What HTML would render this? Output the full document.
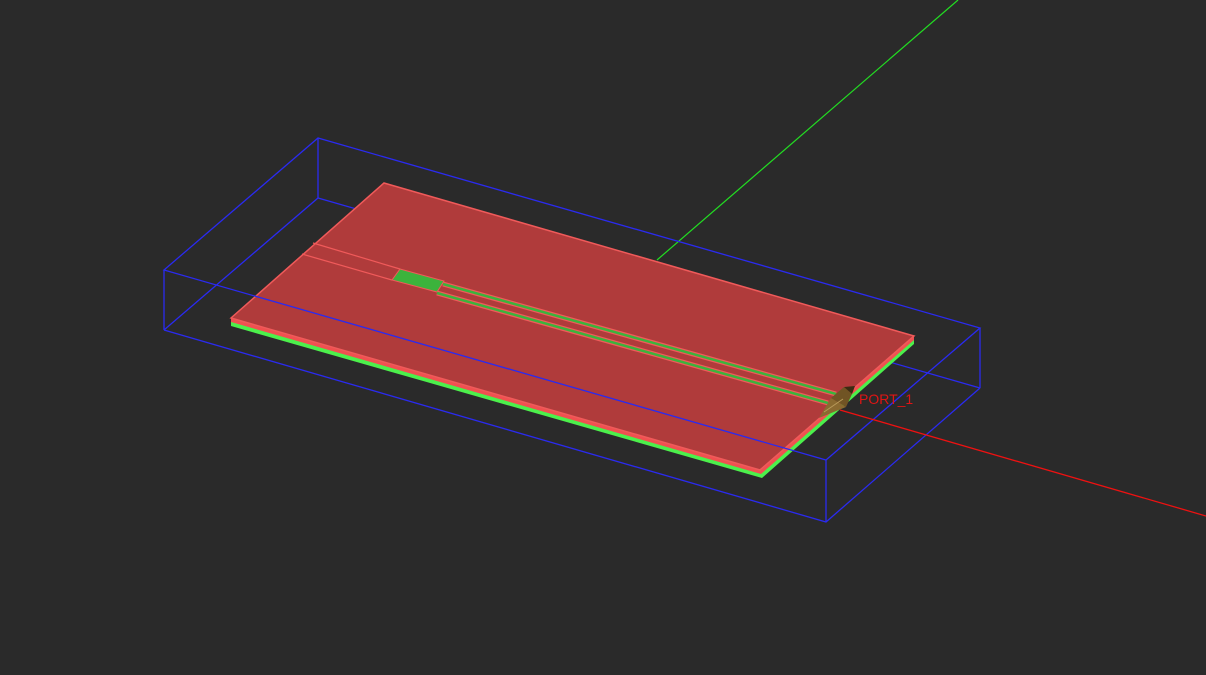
<!DOCTYPE html>
<html><head><style>html,body{margin:0;padding:0;background:#2a2a2a;overflow:hidden}</style></head>
<body>
<svg width="1206" height="675" viewBox="0 0 1206 675" xmlns="http://www.w3.org/2000/svg" style="display:block">
<rect width="1206" height="675" fill="#2a2a2a"/>
<g stroke="#2a2af0" stroke-width="1.3" fill="none">
<polyline points="164,330 318,198 980,388"/>
<line x1="318" y1="138" x2="318" y2="198"/>
</g>
<line x1="657" y1="260" x2="958" y2="0" stroke="#22dd22" stroke-width="1.2"/>
<polygon points="231,318 760,470 914,336 914,344 762,478 231,326" fill="#4cf04c"/>
<polygon points="231,318 760,470 914,336 914,340 761,474 231,322" fill="#f05050"/>
<polygon points="384,183 914,336 760,470 231,318" fill="#b03b3b" stroke="#f05a5a" stroke-width="1.5"/>
<g stroke="#f05a5a" stroke-width="1.2" fill="none">
<line x1="313" y1="243" x2="400" y2="269"/>
<line x1="302" y1="254" x2="392" y2="280"/>
</g>
<polygon points="400,269 444,281 437,292 392,280" fill="#3cb33c" stroke="#f05a5a" stroke-width="1"/>
<g fill="none">
<line x1="443" y1="284" x2="836" y2="394" stroke="#f05a5a" stroke-width="5"/>
<line x1="443" y1="284" x2="836" y2="394" stroke="#3cb33c" stroke-width="2.5"/>
<line x1="437" y1="293" x2="828" y2="403" stroke="#f05a5a" stroke-width="5"/>
<line x1="437" y1="293" x2="828" y2="403" stroke="#3cb33c" stroke-width="2.5"/>
</g>
<g stroke="#2a2af0" stroke-width="1.3" fill="none">
<polygon points="164,270 318,138 980,328 826,460"/>
<line x1="164" y1="270" x2="164" y2="330"/>
<line x1="980" y1="328" x2="980" y2="388"/>
<line x1="826" y1="460" x2="826" y2="522"/>
<polyline points="164,330 826,522 980,388"/>
</g>
<line x1="840" y1="410" x2="1206" y2="516" stroke="#ee1111" stroke-width="1.3"/>
<g>
<polygon points="819,418 831,398 846,407" fill="#8a6a30"/>
<polygon points="831,398 844,387 852,394 846,407" fill="#705424"/>
<polygon points="844,387 855,386 852,394" fill="#3a2c12"/>
<line x1="824" y1="412" x2="843" y2="399" stroke="#b89a5a" stroke-width="1"/>
</g>
<text x="859" y="404" fill="#e01515" font-family="Liberation Sans, sans-serif" font-size="14">PORT_1</text>
</svg>
</body></html>
